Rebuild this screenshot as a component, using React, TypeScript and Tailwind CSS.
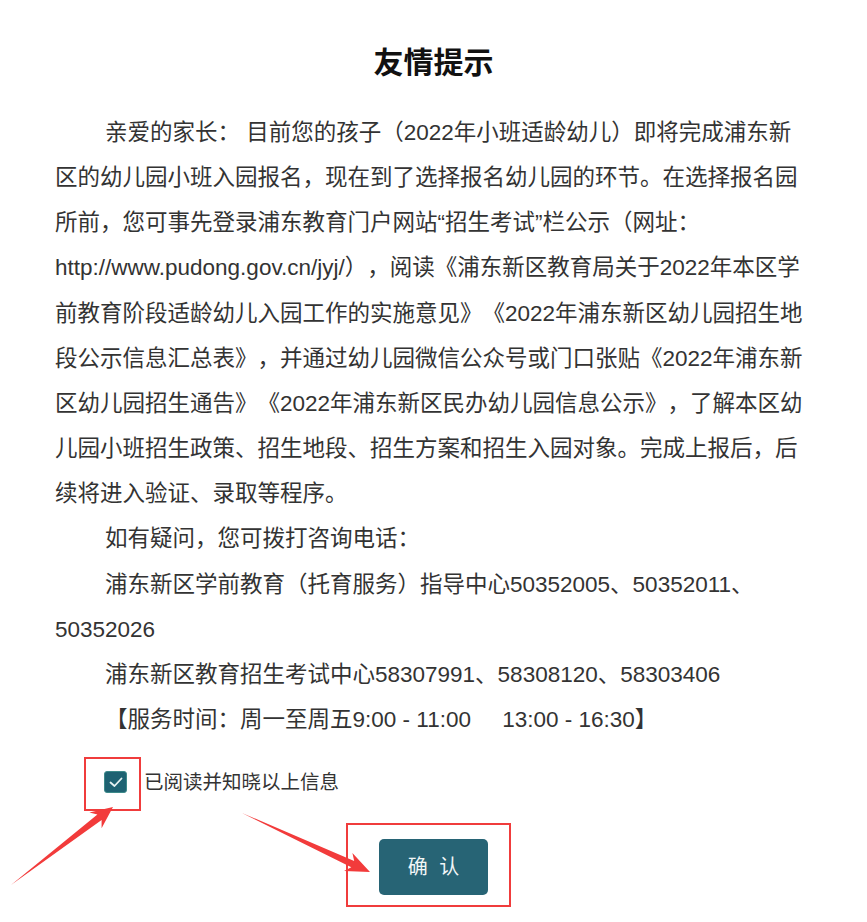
import React from "react";

function arrowPoints(
  tx: number,
  ty: number,
  hx: number,
  hy: number,
  headLen: number,
  headHalf: number,
  shaftHalf: number,
  back: number
): string {
  const dx = hx - tx;
  const dy = hy - ty;
  const L = Math.hypot(dx, dy);
  const ux = dx / L;
  const uy = dy / L;
  const nx = -uy;
  const ny = ux;
  const bx = hx - headLen * ux;
  const by = hy - headLen * uy;
  const kx = hx - (headLen - back) * ux;
  const ky = hy - (headLen - back) * uy;
  const pts: [number, number][] = [
    [tx, ty],
    [kx + shaftHalf * nx, ky + shaftHalf * ny],
    [bx + headHalf * nx, by + headHalf * ny],
    [hx, hy],
    [bx - headHalf * nx, by - headHalf * ny],
    [kx - shaftHalf * nx, ky - shaftHalf * ny],
  ];
  return pts.map((p) => `${p[0].toFixed(1)},${p[1].toFixed(1)}`).join(" ");
}

const arrow1 = arrowPoints(11, 885, 113, 807, 22, 10, 3.5, 5);
const arrow2 = arrowPoints(242, 813, 370, 872, 24, 10, 3.5, 5);

export default function App() {
  return (
    <div className="relative w-[867px] h-[922px] bg-white overflow-hidden font-['Liberation_Sans','Noto_Sans_CJK_SC',sans-serif] [text-spacing-trim:space-all]">
      <div className="pt-[40px]">
        <h1 className="text-center text-[30px] leading-[45px] font-bold text-[#111]">
          友情提示
        </h1>
        <div className="mt-[25px] ml-[55px] w-[752px] text-[22.5px] leading-[45.15px] text-[#333]">
          <p className="indent-[50px]">
            亲爱的家长： 目前您的孩子（2022年小班适龄幼儿）即将完成浦东新区的幼儿园小班入园报名，现在到了选择报名幼儿园的环节。在选择报名园所前，您可事先登录浦东教育门户网站“招生考试”栏公示（网址：http://www.pudong.gov.cn/jyj/），阅读《浦东新区教育局关于2022年本区学前教育阶段适龄幼儿入园工作的实施意见》《2022年浦东新区幼儿园招生地段公示信息汇总表》，并通过幼儿园微信公众号或门口张贴《2022年浦东新区幼儿园招生通告》《2022年浦东新区民办幼儿园信息公示》，了解本区幼儿园小班招生政策、招生地段、招生方案和招生入园对象。完成上报后，后续将进入验证、录取等程序。
          </p>
          <p className="indent-[50px]">如有疑问，您可拨打咨询电话：</p>
          <p className="indent-[50px]">
            浦东新区学前教育（托育服务）指导中心50352005、50352011、50352026
          </p>
          <p className="indent-[50px]">
            浦东新区教育招生考试中心58307991、58308120、58303406
          </p>
          <p className="indent-[50px]">
            【服务时间：周一至周五9:00 - 11:00{"\u00a0\u00a0\u00a0\u00a0\u00a0"}13:00 - 16:30】
          </p>
        </div>

        <div className="mt-[28px] pl-[104px] flex items-center">
          <div className="w-[23px] h-[22px] rounded-[3px] bg-[#1e6272] border border-[#3d8a8a] flex items-center justify-center">
            <svg width="14" height="11" viewBox="0 0 14 11" fill="none">
              <path
                d="M1.5 5.5 L5.5 9 L12.5 1.5"
                stroke="#e6f2f2"
                strokeWidth="1.8"
                strokeLinecap="round"
                strokeLinejoin="round"
              />
            </svg>
          </div>
          <span className="ml-[17px] text-[19.5px] leading-[24px] text-[#333]">
            已阅读并知晓以上信息
          </span>
        </div>

        <div className="mt-[45px] flex justify-center">
          <button className="w-[109px] h-[56px] rounded-[5px] bg-[#276475] text-[#f2f6f7] text-[20px] tracking-[3px] pl-[3px] flex items-center justify-center">
            确 认
          </button>
        </div>
      </div>

      <div className="absolute left-[84px] top-[757px] w-[57px] h-[54px] border-2 border-[#f03c3c]" />
      <div className="absolute left-[346px] top-[823px] w-[165px] h-[84px] border-2 border-[#f03c3c]" />
      <svg className="absolute left-0 top-0" width="867" height="922" viewBox="0 0 867 922">
        <polygon points={arrow1} fill="#f23b3b" />
        <polygon points={arrow2} fill="#f23b3b" />
      </svg>
    </div>
  );
}
